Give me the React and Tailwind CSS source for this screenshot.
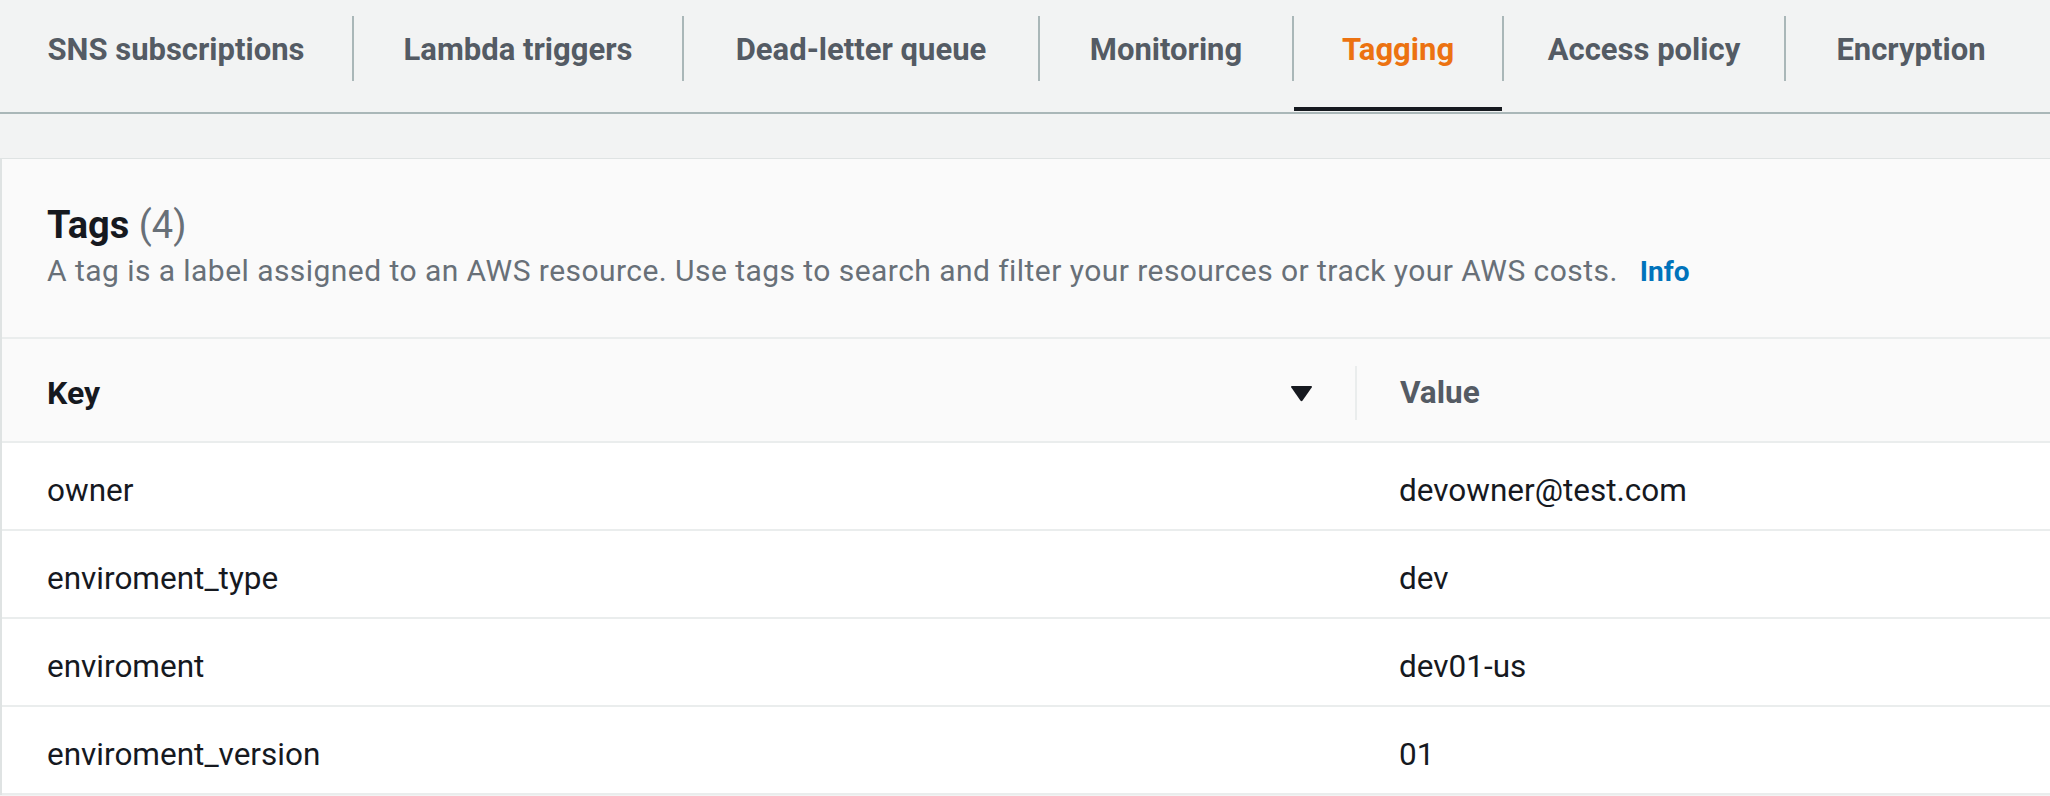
import { useState } from 'react';

const tabs = [
  { label: 'SNS subscriptions', width: 'w-[352px]' },
  { label: 'Lambda triggers', width: 'w-[328px]' },
  { label: 'Dead-letter queue', width: 'w-[354px]' },
  { label: 'Monitoring', width: 'w-[252px]' },
  { label: 'Tagging', width: 'w-[208px]' },
  { label: 'Access policy', width: 'w-[280px]' },
  { label: 'Encryption', width: 'w-[250px]' },
];

const tags = [
  { key: 'owner', value: 'devowner@test.com' },
  { key: 'enviroment_type', value: 'dev' },
  { key: 'enviroment', value: 'dev01-us' },
  { key: 'enviroment_version', value: '01' },
];

const SortDown = () => (
  <svg width="23" height="17" viewBox="0 0 23 17" className="shrink-0">
    <path d="M2 1 H21 Q22.5 1 21.7 2.4 L12.6 15.6 Q11.5 17 10.4 15.6 L1.3 2.4 Q0.5 1 2 1 Z" fill="#16191f" />
  </svg>
);

const Tabs = ({ active, onChange }) => (
  <div className="flex h-[112px] border-b-2 border-[#aab7b8] bg-[#f2f3f3] box-content">
    {tabs.map((tab, idx) => (
      <div key={tab.label} className="flex">
        {idx > 0 && <div className="w-[2px] h-[65px] mt-[16px] bg-[#aab7b8]" />}
        <button
          onClick={() => onChange(tab.label)}
          className={`${tab.width} flex flex-col justify-between items-center`}
        >
          <span
            className={`pt-[32px] text-[31px] leading-[36px] font-bold ${
              active === tab.label ? 'text-[#ec7211]' : 'text-[#545b64]'
            }`}
          >
            {tab.label}
          </span>
          <span className={`w-full h-[4px] mb-[1px] ${active === tab.label ? 'bg-[#16191f]' : ''}`} />
        </button>
      </div>
    ))}
  </div>
);

const TagsTable = () => (
  <section className="border-l-2 border-t border-[#dfe3e3] bg-[#fafafa]">
    <div className="pl-[45px] pt-[44px] pb-[47px] border-b-2 border-[#eaeded]">
      <h2 className="text-[38px] leading-[45px] font-bold text-[#16191f]">
        Tags <span className="font-normal text-[#687078]">(4)</span>
      </h2>
      <p className="mt-[5px] text-[30px] leading-[36px] tracking-[0.45px] text-[#687078]">
        A tag is a label assigned to an AWS resource. Use tags to search and filter your resources or track your AWS costs.
        <a href="#" className="ml-[22px] text-[28px] tracking-normal font-bold text-[#0073bb]">Info</a>
      </p>
    </div>

    <div className="flex items-center h-[104px] pt-[6px] border-b-2 border-[#eaeded]">
      <div className="w-[1353px] flex items-center justify-between pl-[45px] pr-[42px]">
        <span className="text-[32px] font-bold text-[#16191f]">Key</span>
        <SortDown />
      </div>
      <div className="w-[2px] h-[54px] bg-[#eaeded]" />
      <div className="pl-[43px] text-[31.5px] font-bold text-[#545b64]">Value</div>
    </div>

    {tags.map(tag => (
      <div key={tag.key} className="flex items-center h-[88px] pt-[10px] border-b-2 border-[#eaeded] bg-white text-[31.5px] text-[#16191f]">
        <div className="w-[1353px] pl-[45px]">{tag.key}</div>
        <div className="pl-[44px]">{tag.value}</div>
      </div>
    ))}
  </section>
);

export default function App() {
  const [active, setActive] = useState('Tagging');

  return (
    <div className="min-h-screen bg-[#f2f3f3] font-['Roboto',sans-serif]">
      <Tabs active={active} onChange={setActive} />
      <div className="pt-[44px]">
        <TagsTable />
      </div>
    </div>
  );
}
